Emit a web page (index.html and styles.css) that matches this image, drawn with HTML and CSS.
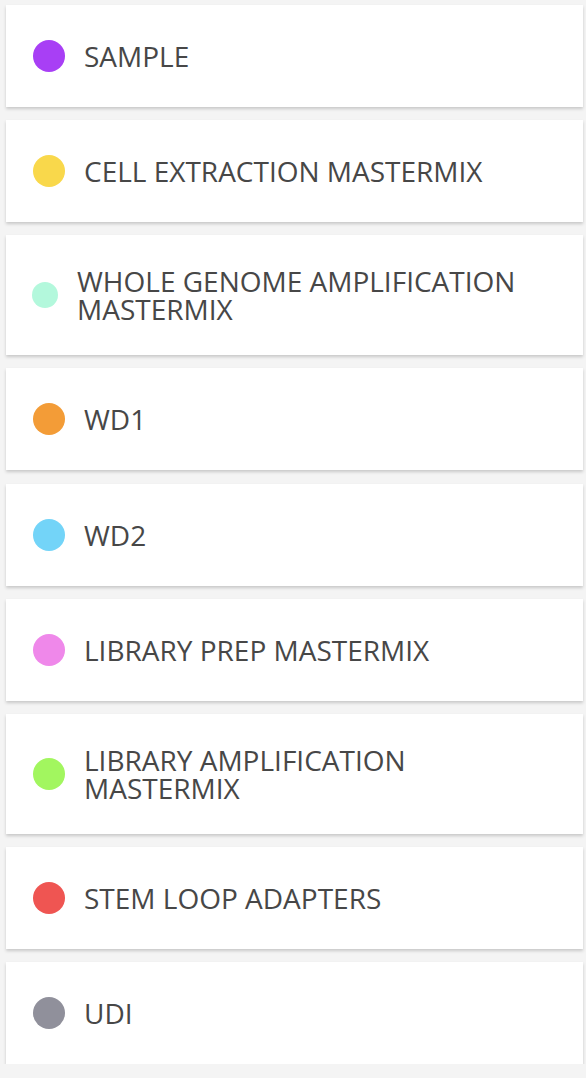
FILE: index.html
```html
<!DOCTYPE html>
<html lang="en">
<head>
<meta charset="utf-8">
<title>Reagents</title>
<link rel="stylesheet" href="styles.css">
</head>
<body>
<div class="list">
  <div class="card"><span class="dot dot--purple"></span><span class="label">SAMPLE</span></div>
  <div class="card"><span class="dot dot--yellow"></span><span class="label">CELL EXTRACTION MASTERMIX</span></div>
  <div class="card"><span class="dot dot--mint dot--small"></span><span class="label">WHOLE GENOME AMPLIFICATION MASTERMIX</span></div>
  <div class="card"><span class="dot dot--orange"></span><span class="label">WD1</span></div>
  <div class="card"><span class="dot dot--blue"></span><span class="label">WD2</span></div>
  <div class="card"><span class="dot dot--pink"></span><span class="label">LIBRARY PREP MASTERMIX</span></div>
  <div class="card"><span class="dot dot--green"></span><span class="label label--wrap">LIBRARY AMPLIFICATION MASTERMIX</span></div>
  <div class="card"><span class="dot dot--red"></span><span class="label">STEM LOOP ADAPTERS</span></div>
  <div class="card"><span class="dot dot--gray"></span><span class="label">UDI</span></div>
</div>
</body>
</html>
```
FILE: styles.css
```css
html, body {
  margin: 0;
  padding: 0;
  background: #f4f4f4;
}

body {
  font-family: "Open Sans", "DejaVu Sans", sans-serif;
}

.list {
  display: flex;
  flex-direction: column;
  gap: 13.15px;
  padding: 5px 3px 0 6px;
}

.card {
  display: flex;
  align-items: center;
  box-sizing: border-box;
  min-height: 102px;
  padding: 32px 27px;
  background: #ffffff;
  box-shadow: 0 2px 3px rgba(0, 0, 0, 0.18);
}

.dot {
  flex: 0 0 32px;
  width: 32px;
  height: 32px;
  border-radius: 50%;
  margin-right: 19px;
}

.dot--small {
  flex-basis: 26px;
  width: 26px;
  height: 26px;
  margin-left: -1px;
  margin-right: 19px;
}

.label {
  font-size: 28px;
  line-height: 28px;
  color: #474747;
}

.label--wrap {
  max-width: 340px;
}

.dot--purple { background: #a83ff5; }
.dot--yellow { background: #f9d84b; }
.dot--mint { background: #b3f8dc; }
.dot--orange { background: #f39c37; }
.dot--blue { background: #73d4f8; }
.dot--pink { background: #ef88ea; }
.dot--green { background: #a2f65f; }
.dot--red { background: #ef5552; }
.dot--gray { background: #90909b; }
```
